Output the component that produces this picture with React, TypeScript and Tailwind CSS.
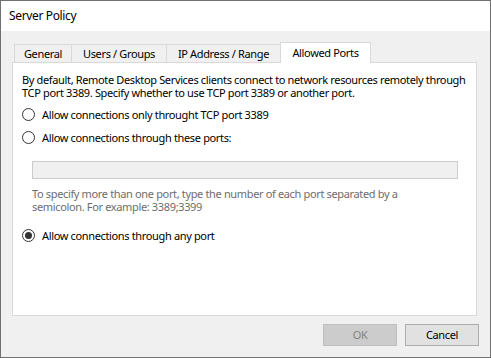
import { useState } from "react"

const font = "font-['Segoe_UI','Noto_Sans',sans-serif]"

function Radio({ checked, label, onSelect }: { checked: boolean; label: string; onSelect: () => void }) {
  return (
    <label className="flex items-center gap-[7px] h-[15px] cursor-default" onClick={onSelect}>
      <span className="w-[13px] h-[13px] rounded-full border border-[#333333] bg-white flex items-center justify-center">
        {checked && <span className="w-[7px] h-[7px] rounded-full bg-[#333333]" />}
      </span>
      <span>{label}</span>
    </label>
  )
}

export default function App() {
  const [mode, setMode] = useState("any")

  const tabs = [
    { name: "General", w: "w-[58px]" },
    { name: "Users / Groups", w: "w-[96px]" },
    { name: "IP Address / Range", w: "w-[115px]" },
  ]

  return (
    <div className={`w-[491px] h-[358px] border border-[#707070] bg-[#f0f0f0] flex flex-col text-[11px] tracking-[-0.35px] text-black whitespace-nowrap ${font}`}>
      {/* Title bar */}
      <div className="h-[30px] bg-white flex items-center pl-2 text-[12px]">Server Policy</div>

      <div className="flex-1 flex flex-col pl-[11px] pr-[13px]">
        {/* Tabs */}
        <div className="mt-[11px] h-[20px] flex items-end pl-[2px] relative z-10">
          {tabs.map((t, i) => (
            <div
              key={t.name}
              className={`${t.w} h-[18px] border border-b-0 border-[#d9d9d9] bg-[#f0f0f0] flex items-center justify-center leading-none ${i > 0 ? "-ml-px" : ""}`}
            >
              {t.name}
            </div>
          ))}
          <div className="w-[91px] h-[21px] -ml-px -mb-px border border-b-0 border-[#d9d9d9] bg-white flex items-center justify-center leading-none pb-[2px]">
            Allowed Ports
          </div>
        </div>

        {/* Panel */}
        <div className="h-[254px] border border-[#d9d9d9] bg-white pl-[9px] pt-[10px] leading-[13px]">
          <p>
            By default, Remote Desktop Services clients connect to network resources remotely through
            <br />
            TCP port 3389. Specify whether to use TCP port 3389 or another port.
          </p>

          <div className="mt-[8px] flex flex-col gap-[8px]">
            <Radio checked={mode === "3389"} label="Allow connections only throught TCP port 3389" onSelect={() => setMode("3389")} />
            <Radio checked={mode === "these"} label="Allow connections through these ports:" onSelect={() => setMode("these")} />
          </div>

          <div className="ml-[10px] mt-[16px] w-[426px] h-[18px] border border-[#cccccc] bg-[#f0f0f0]" />

          <p className="ml-[10px] mt-[8px] text-[#6d6d6d]">
            To specify more than one port, type the number of each port separated by a
            <br />
            semicolon. For example: 3389;3399
          </p>

          <div className="mt-[15px]">
            <Radio checked={mode === "any"} label="Allow connections through any port" onSelect={() => setMode("any")} />
          </div>
        </div>

        {/* Buttons */}
        <div className="mt-[8px] flex justify-end gap-[8px] -mr-[2px]">
          <button disabled className="w-[74px] h-[22px] border border-[#bfbfbf] bg-[#cccccc] text-[#838383]">
            OK
          </button>
          <button className="w-[74px] h-[22px] border border-[#adadad] bg-[#e1e1e1]">Cancel</button>
        </div>
      </div>
    </div>
  )
}
